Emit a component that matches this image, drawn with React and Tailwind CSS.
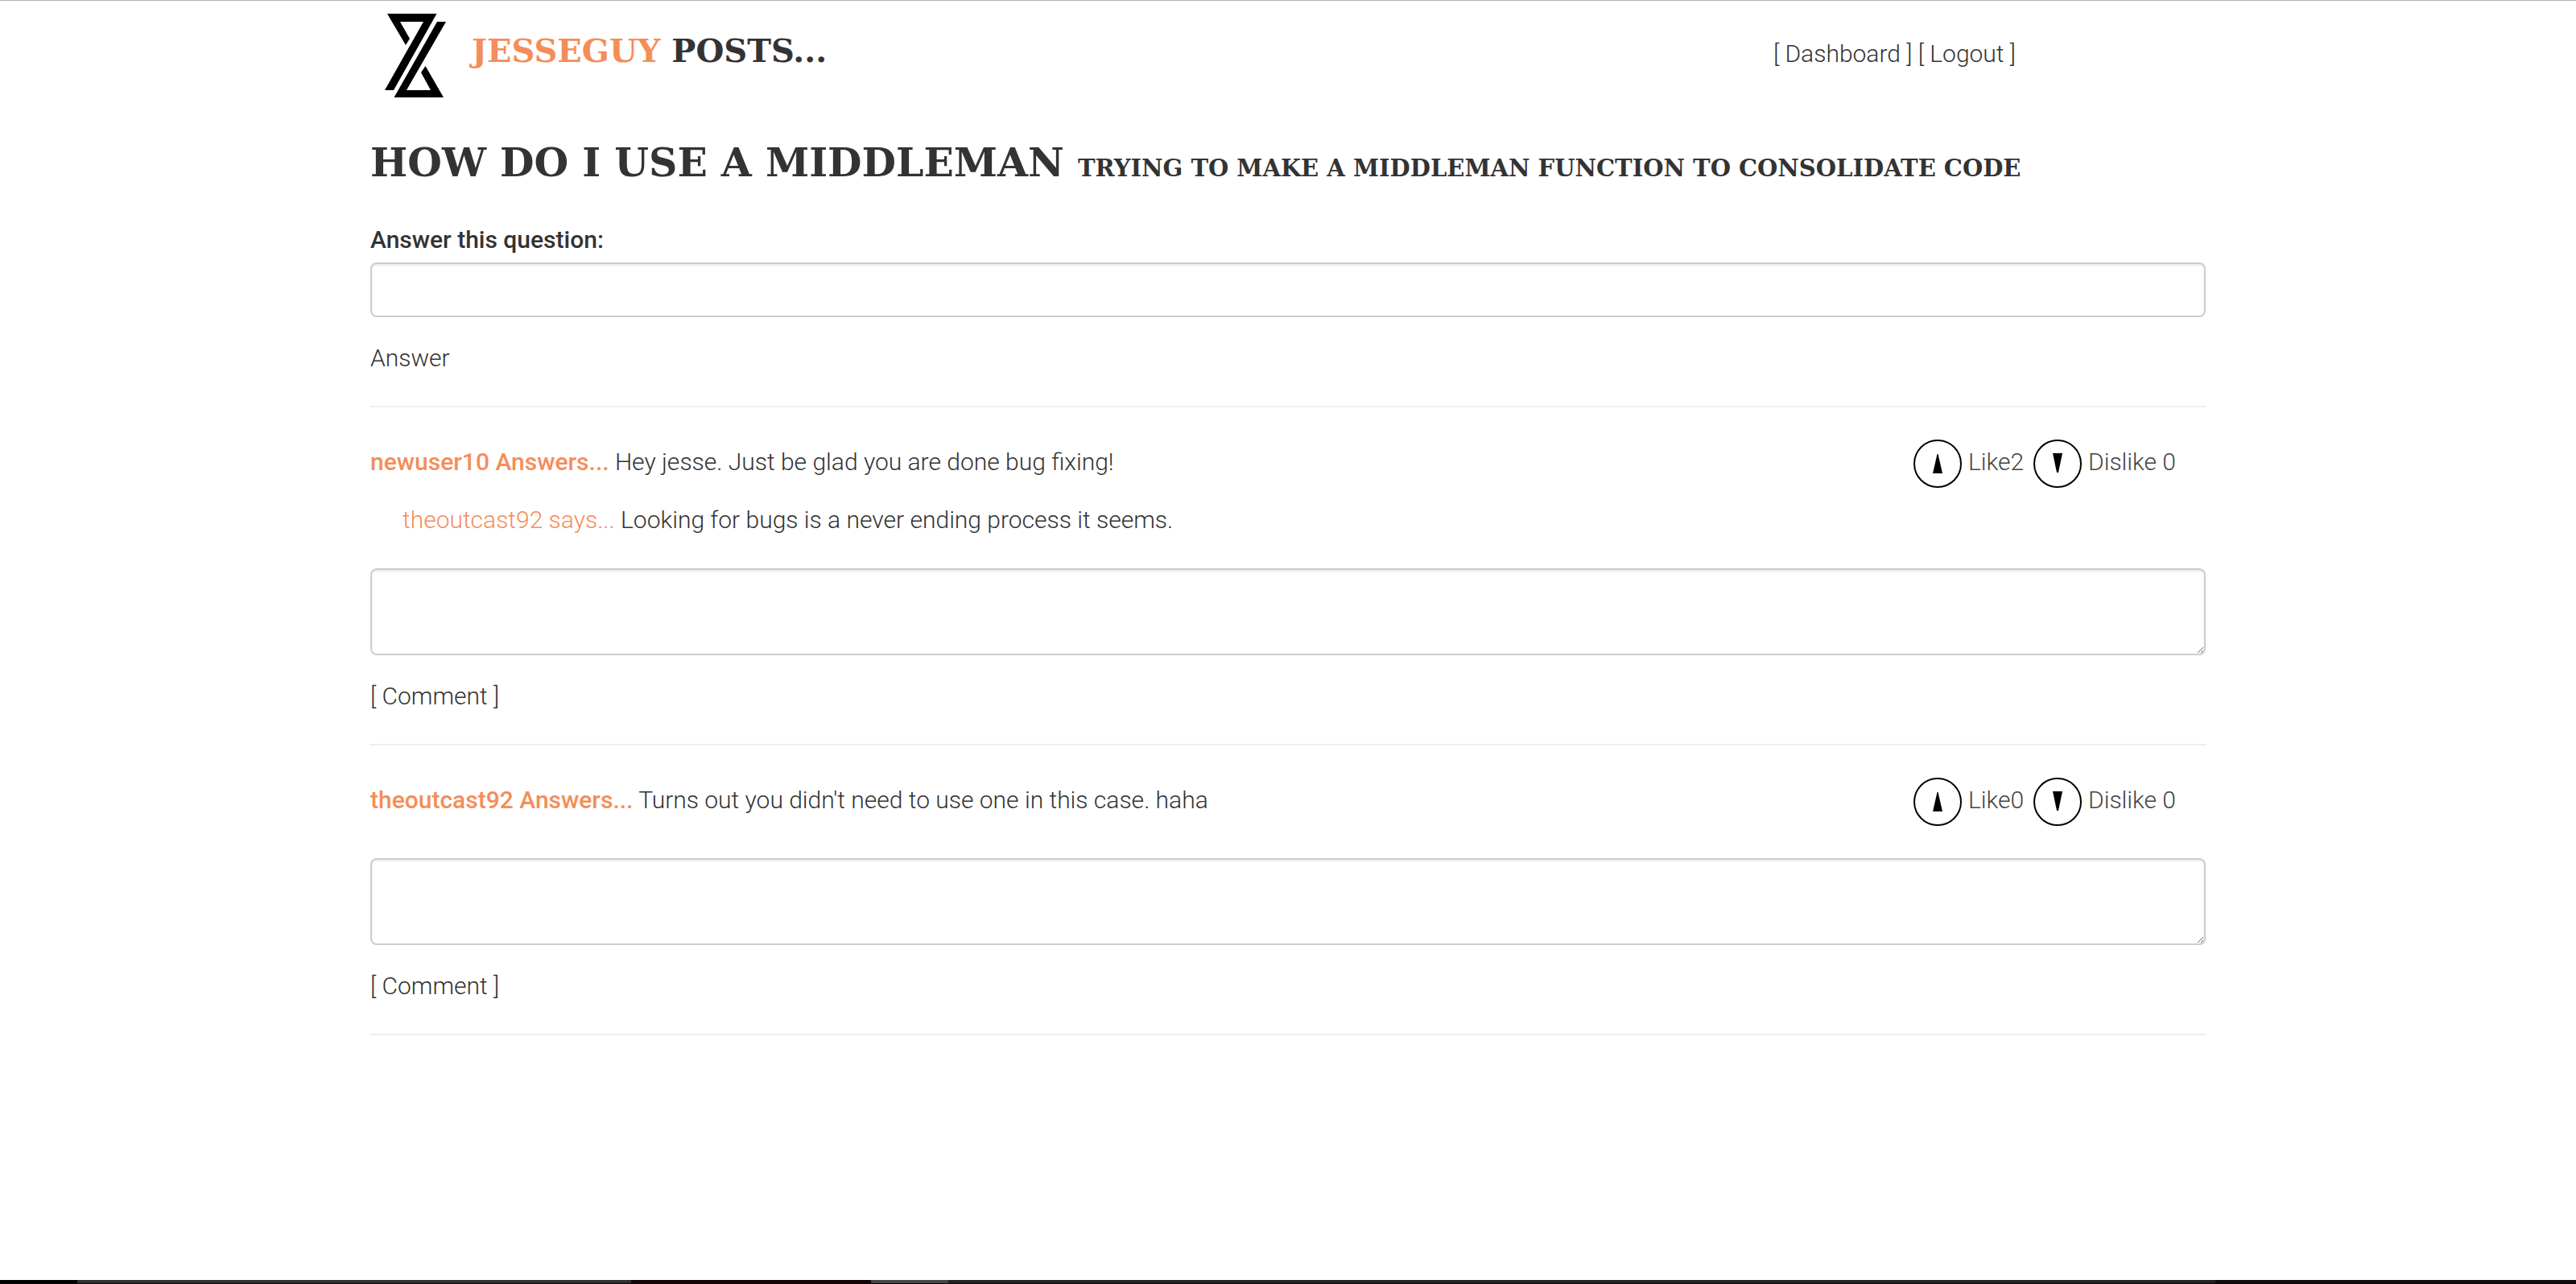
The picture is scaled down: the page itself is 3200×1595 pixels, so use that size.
const heading = 'font-["DejaVu_Serif",serif] font-bold uppercase text-[#333]';
const field =
  "block w-full rounded-lg border-2 border-[#ccc] bg-white px-6 py-3 shadow-[inset_0_2px_2px_rgba(0,0,0,0.075)] outline-none";

const answers = [
  {
    id: "a1",
    author: "newuser10",
    text: "Hey jesse. Just be glad you are done bug fixing!",
    likes: 2,
    dislikes: 0,
    comments: [
      { author: "theoutcast92", text: "Looking for bugs is a never ending process it seems." },
    ],
  },
  {
    id: "a2",
    author: "theoutcast92",
    text: "Turns out you didn't need to use one in this case. haha",
    likes: 0,
    dislikes: 0,
    comments: [],
  },
];

function Logo() {
  return (
    <svg viewBox="0 0 76 104" className="h-[104px] w-[76px]" aria-hidden="true">
      <path d="M3 0H64.500L11 95H0L48 10H19L31 31L26 39Z" />
      <path d="M65 10H76L27 95H57L45 73L50.500 65L73 104H11.500Z" />
    </svg>
  );
}

function Arrow({ down }) {
  return (
    <svg viewBox="0 0 60 60" className="size-[60px] shrink-0" aria-hidden="true">
      <circle cx="30" cy="30" r="29" fill="none" stroke="#000" strokeWidth="2" />
      {down ? <path d="M24 17H36L31 41H29Z" /> : <path d="M29.500 18H30.500L36 42H24Z" />}
    </svg>
  );
}

function Answer({ answer }) {
  return (
    <article className="border-b-2 border-[#eee] pt-10 pb-[39px]">
      <div className="flex items-start">
        <p className="flex-1 pt-2">
          <strong className="font-medium text-[#f58d58]">{answer.author} Answers...</strong>{" "}
          {answer.text}
        </p>
        <div className="flex text-[#444]">
          <button type="button" className="flex w-[149px] gap-2">
            <Arrow />
            <span className="pt-2">Like{answer.likes}</span>
          </button>
          <button type="button" className="flex w-[214px] gap-2">
            <Arrow down />
            <span className="pt-2">Dislike {answer.dislikes}</span>
          </button>
        </div>
      </div>
      {answer.comments.map((c) => (
        <p key={c.text} className="mt-5 pl-10">
          <span className="text-[#f58d58]">{c.author} says...</span> {c.text}
        </p>
      ))}
      <form className="mt-10" onSubmit={(e) => e.preventDefault()}>
        <textarea aria-label={"Comment on the answer by " + answer.author} className={field + " h-[108px]"} />
        <button type="submit" className="mt-[31px] block">
          [ Comment ]
        </button>
      </form>
    </article>
  );
}

export default function App() {
  return (
    <div className='flex min-h-screen flex-col border-t border-[#b0b0b0] bg-white font-["Roboto",sans-serif] text-[30px] font-light leading-10 text-[#333]'>
      <div className="mx-auto w-full max-w-[2340px] flex-1 px-[30px]">
        <header className="flex items-start pt-4 pl-[18px]">
          <Logo />
          <h2 className={heading + " flex-1 pt-4 pl-8 text-[40px] leading-[60px]"}>
            <span className="text-[#f58d58]">jesseguy</span> posts...
          </h2>
          <nav className="mr-[236px] pt-[30px]">
            <a href="#dashboard">[ Dashboard ]</a> <a href="#logout">[ Logout ]</a>
          </nav>
        </header>

        <h1 className={heading + " mt-12 text-[49px] leading-[66px]"}>
          How do I use a middleman{" "}
          <small className="text-[29px]">Trying to make a middleman function to consolidate code</small>
        </h1>

        <form className="border-b-2 border-[#eee] pt-9 pb-[39px]" onSubmit={(e) => e.preventDefault()}>
          <label htmlFor="answer" className="mb-2 block font-medium">
            Answer this question:
          </label>
          <input id="answer" type="text" className={field + " h-[68px]"} />
          <button type="submit" className="mt-[31px] block">
            Answer
          </button>
        </form>

        {answers.map((a) => (
          <Answer key={a.id} answer={a} />
        ))}
      </div>

      <footer className="flex h-[5px] border-b border-[#140408] bg-[#222424]" aria-hidden="true">
        <div className="w-[3%] bg-black" />
        <div className="w-[21.5%] bg-[#303232]" />
        <div className="w-[9.3%] bg-[#140408]" />
        <div className="w-[3%] bg-[#474747]" />
        <div className="flex-1" />
        <div className="w-[14%] bg-[#100c0b]" />
      </footer>
    </div>
  );
}
